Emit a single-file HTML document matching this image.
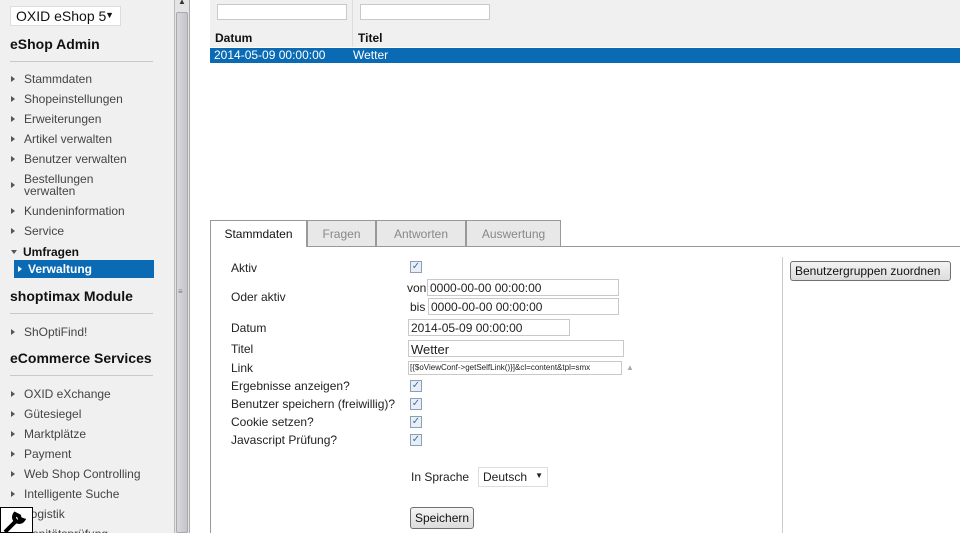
<!DOCTYPE html>
<html><head><meta charset="utf-8"><style>
*{box-sizing:border-box}
body{margin:0;width:960px;height:533px;overflow:hidden;background:#fff;font-family:"Liberation Sans","DejaVu Sans",sans-serif;font-size:12px;color:#222;position:relative}
.a{position:absolute;white-space:nowrap}
#side{position:absolute;left:0;top:0;width:174px;height:533px;background:#f0f0f0;overflow:hidden}
.h{position:absolute;left:10px;font-weight:bold;font-size:14px;color:#111}
.hr{position:absolute;left:10px;width:143px;height:1px;background:#c8c8c8}
.it{position:absolute;left:11px;color:#444;font-size:12px;line-height:12px}
.it:before{content:"";display:inline-block;border-left:4px solid #555;border-top:3.5px solid transparent;border-bottom:3.5px solid transparent;margin-right:9px;vertical-align:1px}
.inp{position:absolute;border:1px solid #c9c9c9;background:#fff;height:17px;padding:1px 2px;font-size:12px}
.cb{position:absolute;width:12px;height:12px;border:1px solid #8aa0b8;background:#e8eef5;font-size:10px;line-height:10px;text-align:center;color:#4a6a9a}
.lbl{position:absolute;left:231px;font-size:12px;color:#222}
.btn{position:absolute;border:1px solid #707070;border-radius:3px;background:linear-gradient(#f4f4f4,#dcdcdc);font-size:12px;padding:2px 4px;color:#111}
.tab{position:absolute;top:220px;height:26px;border:1px solid #999;border-bottom:none;background:#e8e8e8;color:#888;text-align:center;line-height:26px;font-size:12px;z-index:2}
</style></head><body>
<div id="side">
<div class="a" style="left:10px;top:6px;width:111px;height:20px;background:#fff;border:1px solid #ddd;font-size:14px;padding:1px 5px;color:#111">OXID eShop 5<span style="position:absolute;right:6px;top:3px;font-size:9px">▼</span></div>
<div class="h" style="top:36px">eShop Admin</div>
<div class="hr" style="top:61px"></div>
<div class="it" style="top:73px">Stammdaten</div>
<div class="it" style="top:93px">Shopeinstellungen</div>
<div class="it" style="top:113px">Erweiterungen</div>
<div class="it" style="top:133px">Artikel verwalten</div>
<div class="it" style="top:153px">Benutzer verwalten</div>
<div class="a" style="left:11px;top:173px;color:#444;line-height:12px"><span style="display:inline-block;border-left:4px solid #555;border-top:3.5px solid transparent;border-bottom:3.5px solid transparent;margin-right:9px;vertical-align:-5px"></span>Bestellungen</div>
<div class="a" style="left:24px;top:185px;color:#444;line-height:12px">verwalten</div>
<div class="it" style="top:205px">Kundeninformation</div>
<div class="it" style="top:225px">Service</div>
<div class="a" style="left:11px;top:245px;color:#111;font-weight:bold"><span style="display:inline-block;border-top:4px solid #555;border-left:3.5px solid transparent;border-right:3.5px solid transparent;margin-right:6px;vertical-align:2px"></span>Umfragen</div>
<div class="a" style="left:14px;top:260px;width:140px;height:18px;background:#0a6ab4;color:#fff;font-weight:bold;padding:2px 0 0 4px"><span style="display:inline-block;border-left:4px solid #fff;border-top:3.5px solid transparent;border-bottom:3.5px solid transparent;margin-right:6px;vertical-align:1px"></span>Verwaltung</div>
<div class="h" style="top:288px">shoptimax Module</div>
<div class="hr" style="top:313px"></div>
<div class="it" style="top:326px">ShOptiFind!</div>
<div class="h" style="top:350px">eCommerce Services</div>
<div class="hr" style="top:375px"></div>
<div class="it" style="top:388px">OXID eXchange</div>
<div class="it" style="top:408px">Gütesiegel</div>
<div class="it" style="top:428px">Marktplätze</div>
<div class="it" style="top:448px">Payment</div>
<div class="it" style="top:468px">Web Shop Controlling</div>
<div class="it" style="top:488px">Intelligente Suche</div>
<div class="it" style="top:508px">Logistik</div>
<div class="it" style="top:528px">Bonitätsprüfung</div>
<div class="a" style="left:0;top:507px;width:33px;height:26px;border:1px solid #000;background:#fff"><svg width="30" height="26" viewBox="0 0 30 26"><path d="M4 24 L16 12 M14 6 a5 5 0 1 0 8 6 l-3-1 -1-3z" stroke="#000" stroke-width="4" fill="none"/></svg></div>
</div>
<div class="a" style="left:174px;top:0;width:16px;height:533px;background:#e4e4e4;border-left:1px solid #bbb;border-right:1px solid #aaa"></div>
<div class="a" style="left:176px;top:12px;width:12px;height:521px;background:linear-gradient(90deg,#d8d8dc,#c4c4ca);border:1px solid #a8a8ae;border-radius:2px"></div>
<div class="a" style="left:178px;top:287px;font-size:8px;color:#777">≡</div>
<div class="a" style="left:178px;top:-3px;font-size:8px;color:#333">▲</div>
<div class="a" style="left:210px;top:0;width:750px;height:47px;background:#f0f0f0"></div>
<div class="a" style="left:352px;top:0;width:1px;height:47px;background:#ddd"></div>
<div class="inp" style="left:217px;top:4px;width:130px;height:16px"></div>
<div class="inp" style="left:360px;top:4px;width:130px;height:16px"></div>
<div class="a" style="left:215px;top:31px;font-weight:bold;color:#111">Datum</div>
<div class="a" style="left:358px;top:31px;font-weight:bold;color:#111">Titel</div>
<div class="a" style="left:210px;top:48px;width:750px;height:15px;background:#0a6ab4;color:#fff;line-height:15px"><span style="margin-left:4px">2014-05-09 00:00:00</span><span style="position:absolute;left:143px">Wetter</span></div>
<div class="a" style="left:210px;top:246px;width:750px;height:1px;background:#999"></div>
<div class="a" style="left:210px;top:220px;width:1px;height:313px;background:#999"></div>
<div class="tab" style="left:210px;width:97px;background:#fff;color:#111;height:27px">Stammdaten</div>
<div class="tab" style="left:307px;width:69px">Fragen</div>
<div class="tab" style="left:376px;width:90px">Antworten</div>
<div class="tab" style="left:466px;width:95px">Auswertung</div>
<div class="a" style="left:782px;top:257px;width:1px;height:276px;background:#ccc"></div>
<div class="btn" style="left:790px;top:261px;width:161px">Benutzergruppen zuordnen</div>
<div class="lbl" style="top:261px">Aktiv</div><div class="cb" style="left:410px;top:261px">✓</div>
<div class="lbl" style="top:290px">Oder aktiv</div>
<div class="a" style="left:407px;top:281px">von</div><div class="inp" style="left:427px;top:279px;width:192px">0000-00-00 00:00:00</div>
<div class="a" style="left:410px;top:300px">bis</div><div class="inp" style="left:428px;top:298px;width:191px">0000-00-00 00:00:00</div>
<div class="lbl" style="top:321px">Datum</div><div class="inp" style="left:408px;top:319px;width:162px">2014-05-09 00:00:00</div>
<div class="lbl" style="top:342px">Titel</div><div class="inp" style="left:408px;top:340px;width:216px;font-size:13px">Wetter</div>
<div class="lbl" style="top:361px">Link</div><div class="inp" style="left:408px;top:361px;width:214px;height:14px;font-size:8px;padding:1px;overflow:hidden">[{$oViewConf-&gt;getSelfLink()}]&amp;cl=content&amp;tpl=smx</div>
<div class="a" style="left:626px;top:363px;font-size:8px;color:#aaa">▲</div>
<div class="lbl" style="top:379px">Ergebnisse anzeigen?</div><div class="cb" style="left:410px;top:380px">✓</div>
<div class="lbl" style="top:397px">Benutzer speichern (freiwillig)?</div><div class="cb" style="left:410px;top:398px">✓</div>
<div class="lbl" style="top:415px">Cookie setzen?</div><div class="cb" style="left:410px;top:416px">✓</div>
<div class="lbl" style="top:433px">Javascript Prüfung?</div><div class="cb" style="left:410px;top:434px">✓</div>
<div class="a" style="left:411px;top:470px">In Sprache</div>
<div class="a" style="left:478px;top:467px;width:70px;height:20px;border:1px solid #ddd;padding:2px 4px;font-size:12px">Deutsch<span style="position:absolute;right:4px;top:3px;font-size:8px">▼</span></div>
<div class="btn" style="left:410px;top:507px;padding:3px 4px">Speichern</div>
</body></html>
